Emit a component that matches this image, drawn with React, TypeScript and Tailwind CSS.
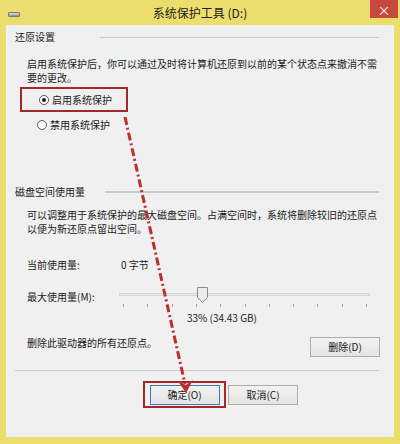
import React from "react";

const font = { fontFamily: '"Noto Sans CJK SC", "Liberation Sans", sans-serif' };

const Radio: React.FC<{ checked?: boolean; label: string }> = ({ checked, label }) => (
  <div className="flex items-center h-[14px]">
    <span className="w-[10px] h-[10px] rounded-full border border-[#5a5a5a] bg-white flex items-center justify-center">
      {checked && <span className="w-[4px] h-[4px] rounded-full bg-[#1a1a1a]" />}
    </span>
    <span className="ml-[3px]">{label}</span>
  </div>
);

const WinButton: React.FC<{ label: string; primary?: boolean }> = ({ label, primary }) => (
  <div
    className={
      "w-[70px] h-[20px] flex items-center justify-center bg-gradient-to-b from-[#f2f2f2] to-[#e4e4e4] text-[10px] " +
      (primary ? "border border-[#3d7bad]" : "border border-[#adadad]")
    }
  >
    {label}
  </div>
);

const Slider: React.FC = () => {
  const ticks = Array.from({ length: 11 }, (_, i) => i);
  return (
    <div className="relative w-[251px] h-[20px]">
      <div className="absolute left-0 right-0 top-[6px] h-[3px] bg-[#e7e7e7] border border-[#d6d6d6]" />
      <svg className="absolute left-[78px] top-0" width="11" height="16" viewBox="0 0 11 16">
        <path d="M0.5 0.5 H10.5 V10.5 L5.5 15.5 L0.5 10.5 Z" fill="#ececec" stroke="#8a8a8a" />
      </svg>
      {ticks.map((t) => (
        <div
          key={t}
          className="absolute top-[17px] w-[1px] h-[3px] bg-[#a0a0a0]"
          style={{ left: 4 + t * 24.3 }}
        />
      ))}
    </div>
  );
};

export default function App() {
  return (
    <div
      className="relative w-[400px] h-[444px] bg-[#ebde6c] flex flex-col text-[10px] text-[#1b1b1b] overflow-hidden"
      style={font}
    >
      {/* title bar */}
      <div className="relative h-[25px] flex items-center justify-center">
        <div className="absolute left-[8px] top-[12px] w-[12px] h-[5px] rounded-[1px] bg-gradient-to-b from-[#e4e4e4] to-[#8f8f8f] border border-[#7a7a7a]" />
        <span className="text-[12px] text-[#222] mt-[1px]">系统保护工具 (D:)</span>
        <div className="absolute right-[2px] top-0 w-[28px] h-[18px] bg-[#c7483e] flex items-center justify-center text-white text-[13px] leading-none">
          ×
        </div>
      </div>

      {/* body */}
      <div className="mx-[6px] h-[412px] bg-[#f0f0f0] pl-[9px] pr-[15px] flex flex-col leading-[14px]">
        <div className="mt-[5px] flex items-center">
          <span>还原设置</span>
          <div className="ml-[45px] flex-1 h-[1px] bg-[#c8c8c8]" />
        </div>
        <div className="mt-[13px] pl-[12px]">
          <div>启用系统保护后，你可以通过及时将计算机还原到以前的某个状态点来撤消不需</div>
          <div>要的更改。</div>
        </div>
        <div className="mt-[2px] ml-[5px] w-[108px] h-[25px] border-2 border-[#a3282a] flex items-center pl-[17px]">
          <Radio checked label="启用系统保护" />
        </div>
        <div className="mt-[6px] pl-[22px]">
          <Radio label="禁用系统保护" />
        </div>

        <div className="mt-[53px] flex items-center">
          <span>磁盘空间使用量</span>
          <div className="ml-[20px] flex-1 h-[2px] bg-[#c8c8c8]" />
        </div>
        <div className="mt-[9px] pl-[12px]">
          <div>可以调整用于系统保护的最大磁盘空间。占满空间时，系统将删除较旧的还原点</div>
          <div>以便为新还原点留出空间。</div>
        </div>
        <div className="mt-[22px] pl-[12px] flex">
          <span className="w-[94px]">当前使用量:</span>
          <span>0 字节</span>
        </div>
        <div className="mt-[15px] pl-[12px] flex items-start">
          <span className="w-[92px] mt-[3px]">最大使用量(M):</span>
          <Slider />
        </div>
        <div className="mt-[4px] pl-[172px]">33% (34.43 GB)</div>

        <div className="mt-[12px] pl-[12px] flex items-start justify-between">
          <span className="mt-[-1px]">删除此驱动器的所有还原点。</span>
          <div className="mr-[-1px]">
            <WinButton label="删除(D)" />
          </div>
        </div>
        <div className="mt-[13px] h-[1px] bg-[#c8c8c8]" />
        <div className="mt-[10px] flex items-center">
          <div className="ml-[128px] w-[83px] h-[27px] border-2 border-[#a3282a] flex items-center justify-center">
            <WinButton label="确定(O)" primary />
          </div>
          <div className="ml-[2px]">
            <WinButton label="取消(C)" />
          </div>
        </div>
      </div>

      {/* dash-dot arrow overlay */}
      <svg className="absolute inset-0 pointer-events-none" width="400" height="444" viewBox="0 0 400 444">
        <line
          x1="125"
          y1="117"
          x2="185"
          y2="384"
          stroke="#b8322b"
          strokeWidth="3"
          strokeDasharray="8 3 2 3"
        />
        <path d="M178 381 L186 393 L193 380 L186 385 Z" fill="#b8322b" />
      </svg>
    </div>
  );
}
